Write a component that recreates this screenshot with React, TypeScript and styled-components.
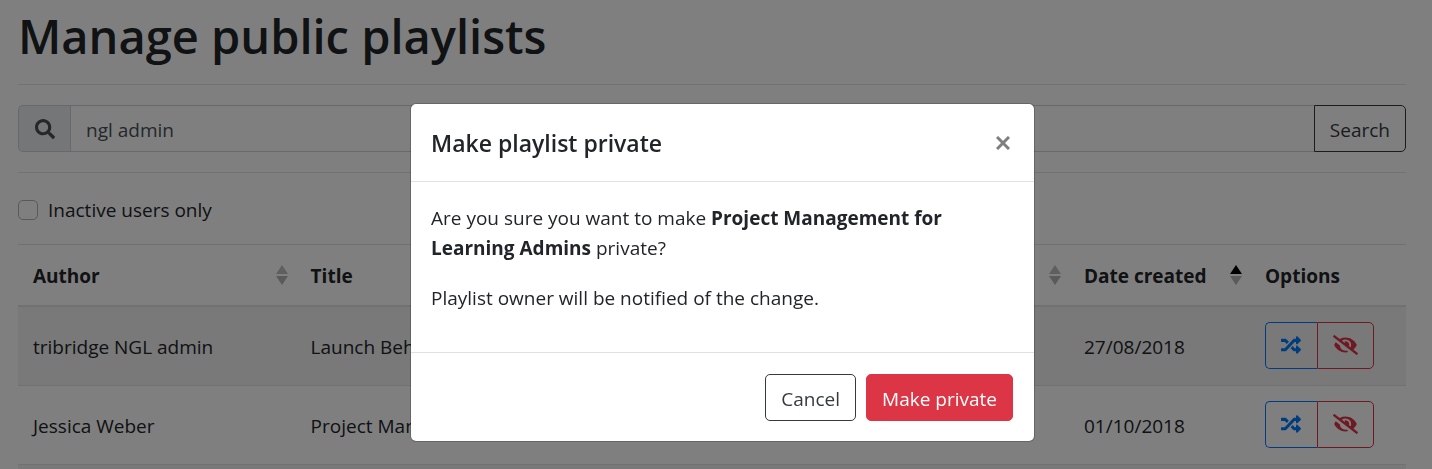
import React from "react";
import styled, { createGlobalStyle, css } from "styled-components";
import { FaEyeSlash, FaRandom, FaSearch } from "react-icons/fa";

const GlobalStyle = createGlobalStyle`
  *, *::before, *::after { box-sizing: border-box; }
  body {
    margin: 0;
    background: #fff;
    color: #212529;
    font-family: "Segoe UI", "Open Sans", "Noto Sans", sans-serif;
    font-size: 19px;
    line-height: 30px;
    overflow: hidden;
  }
  button, input { font: inherit; }
`;

const Page = styled.main`
  height: 100vh;
  overflow: hidden;
  padding: 6px 26px 0 18px;
`;

const PageTitle = styled.h1`
  margin: 0;
  font-size: 47px;
  font-weight: 600;
  line-height: 60px;
`;

const Rule = styled.hr<{ $above: number }>`
  margin: ${(p) => p.$above}px 0 20px;
  border: 0;
  border-top: 1px solid rgba(0, 0, 0, 0.1);
`;

const SearchGroup = styled.form`
  display: flex;
  height: 47px;
`;

const SearchIcon = styled.span`
  display: flex;
  align-items: center;
  justify-content: center;
  width: 52px;
  border: 1px solid #ced4da;
  border-right: 0;
  border-radius: 5px 0 0 5px;
  background: #e9ecef;
  color: #495057;
  font-size: 20px;
`;

const SearchInput = styled.input`
  flex: 1;
  min-width: 0;
  padding: 2px 15px 0;
  border: 1px solid #ced4da;
  border-right: 0;
  background: #fff;
  color: #495057;
`;

const variants = {
  dark: css`
    border-color: #343a40;
    background: transparent;
    color: #343a40;
  `,
  danger: css`
    border-color: #dc3545;
    background: #dc3545;
    color: #fff;
  `,
  outlineDanger: css`
    border-color: #dc3545;
    background: transparent;
    color: #dc3545;
  `,
  outlinePrimary: css`
    border-color: #007bff;
    background: transparent;
    color: #007bff;
  `,
};

const Button = styled.button<{ $variant: keyof typeof variants }>`
  display: inline-flex;
  align-items: center;
  justify-content: center;
  height: 47px;
  padding: 2px 15px 0;
  border: 1px solid;
  border-radius: 5px;
  cursor: pointer;
  ${(p) => variants[p.$variant]}
`;

const SearchButton = styled(Button)`
  border-radius: 0 5px 5px 0;
`;

const FilterLabel = styled.label`
  display: flex;
  align-items: center;
  gap: 10px;
  width: fit-content;
  margin: 22px 0 19px;
`;

const Checkbox = styled.input`
  appearance: none;
  width: 20px;
  height: 20px;
  margin: 0;
  border: 1px solid #adb5bd;
  border-radius: 5px;
  background: #fff;
`;

const Table = styled.table`
  width: 100%;
  table-layout: fixed;
  border-collapse: separate;
  border-spacing: 0;
`;

const Column = styled.col<{ $width?: string }>`
  width: ${(p) => p.$width ?? "auto"};
`;

const HeadCell = styled.th`
  padding: 16px 8px 14px 15px;
  border-top: 1px solid #dee2e6;
  border-bottom: 2px solid #dee2e6;
  font-weight: 700;
  text-align: left;
`;

const HeadContent = styled.div`
  display: flex;
  align-items: center;
  justify-content: space-between;
`;

const Row = styled.tr`
  height: 78px;
  &:nth-child(odd) {
    background: rgba(0, 0, 0, 0.05);
  }
  & + & {
    height: 79px;
  }
  & + & > td {
    border-top: 1px solid #dee2e6;
  }
`;

const Cell = styled.td`
  padding: 2px 15px 0;
  overflow: hidden;
  white-space: nowrap;
`;

const ActionCell = styled(Cell)`
  padding: 0 15px 2px;
`;

const ButtonGroup = styled.div`
  display: flex;
  button {
    padding: 0 15px;
  }
  button:first-child {
    padding-right: 16px;
    border-right: 0;
    border-radius: 5px 0 0 5px;
  }
  button:last-child {
    border-radius: 0 5px 5px 0;
  }
`;

const ShuffleIcon = styled(FaRandom)`
  width: 20px;
  height: 20px;
`;

const HideIcon = styled(FaEyeSlash)`
  width: 25px;
  height: 20px;
`;

const Backdrop = styled.div`
  position: fixed;
  inset: 0;
  display: flex;
  align-items: flex-start;
  justify-content: center;
  padding: 103px 0 0 13px;
  background: rgba(0, 0, 0, 0.5);
`;

const Dialog = styled.section`
  width: 100%;
  max-width: 625px;
  border: 1px solid rgba(0, 0, 0, 0.2);
  border-radius: 6px;
  background: #fff;
  background-clip: padding-box;
`;

const DialogHeader = styled.header`
  display: flex;
  align-items: center;
  justify-content: space-between;
  padding: 20px;
  border-bottom: 1px solid #dee2e6;
`;

const DialogTitle = styled.h2`
  margin: 0;
  padding-top: 2px;
  font-size: 23px;
  font-weight: 600;
  line-height: 35px;
`;

const CloseButton = styled.button`
  display: flex;
  padding: 4px;
  border: 0;
  background: transparent;
  color: #7f7f7f;
  cursor: pointer;
`;

const DialogBody = styled.div`
  padding: 21px 20px 19px;
  p {
    margin: 0 0 20px;
  }
`;

const DialogFooter = styled.footer`
  display: flex;
  justify-content: flex-end;
  gap: 10px;
  padding: 21px 21px 20px;
  border-top: 1px solid #dee2e6;
`;

function SortIcon({ active = false }: { active?: boolean }) {
  return (
    <svg width="12" height="22" viewBox="0 0 12 22" aria-hidden="true">
      <path d="M6 0l6 9H0z" fill={active ? "#000" : "#bfbfbf"} />
      <path d="M0 11h12l-6 9z" fill="#b4b4b4" />
    </svg>
  );
}

const columns = [
  { label: "Author", width: "20%", sortable: true },
  { label: "Title", sortable: true },
  { label: "Date created", width: "181px", sortable: true, active: true },
  { label: "Options", width: "156px" },
];

const playlists = [
  { author: "tribridge NGL admin", title: "Launch Behaviours", date: "27/08/2018" },
  {
    author: "Jessica Weber",
    title: "Project Management for Learning Admins",
    date: "01/10/2018",
  },
];

export default function App() {
  return (
    <>
      <GlobalStyle />
      <Page>
        <PageTitle>Manage public playlists</PageTitle>
        <Rule $above={18} />
        <SearchGroup onSubmit={(e) => e.preventDefault()}>
          <SearchIcon>
            <FaSearch aria-hidden="true" />
          </SearchIcon>
          <SearchInput type="text" aria-label="Search playlists" defaultValue="ngl admin" />
          <SearchButton $variant="dark" type="submit">
            Search
          </SearchButton>
        </SearchGroup>
        <Rule $above={20} />
        <FilterLabel>
          <Checkbox type="checkbox" />
          Inactive users only
        </FilterLabel>
        <Table>
          <colgroup>
            {columns.map((c) => (
              <Column key={c.label} $width={c.width} />
            ))}
          </colgroup>
          <thead>
            <tr>
              {columns.map((c) => (
                <HeadCell key={c.label} scope="col">
                  <HeadContent>
                    {c.label}
                    {c.sortable && <SortIcon active={c.active} />}
                  </HeadContent>
                </HeadCell>
              ))}
            </tr>
          </thead>
          <tbody>
            {playlists.map((p) => (
              <Row key={p.author}>
                <Cell>{p.author}</Cell>
                <Cell>{p.title}</Cell>
                <Cell>{p.date}</Cell>
                <ActionCell>
                  <ButtonGroup>
                    <Button $variant="outlinePrimary" type="button" aria-label="Reassign playlist">
                      <ShuffleIcon />
                    </Button>
                    <Button $variant="outlineDanger" type="button" aria-label="Make playlist private">
                      <HideIcon />
                    </Button>
                  </ButtonGroup>
                </ActionCell>
              </Row>
            ))}
            <Row>
              <Cell colSpan={4} />
            </Row>
          </tbody>
        </Table>
      </Page>
      <Backdrop>
        <Dialog role="dialog" aria-modal="true" aria-labelledby="dialog-title">
          <DialogHeader>
            <DialogTitle id="dialog-title">Make playlist private</DialogTitle>
            <CloseButton type="button" aria-label="Close">
              <svg width="14" height="14" viewBox="0 0 14 14" aria-hidden="true">
                <path d="M1 1l12 12M13 1L1 13" stroke="currentColor" strokeWidth="3" />
              </svg>
            </CloseButton>
          </DialogHeader>
          <DialogBody>
            <p>
              Are you sure you want to make <strong>Project Management for Learning Admins</strong>{" "}
              private?
            </p>
            <p>Playlist owner will be notified of the change.</p>
          </DialogBody>
          <DialogFooter>
            <Button $variant="dark" type="button">
              Cancel
            </Button>
            <Button $variant="danger" type="button">
              Make private
            </Button>
          </DialogFooter>
        </Dialog>
      </Backdrop>
    </>
  );
}
